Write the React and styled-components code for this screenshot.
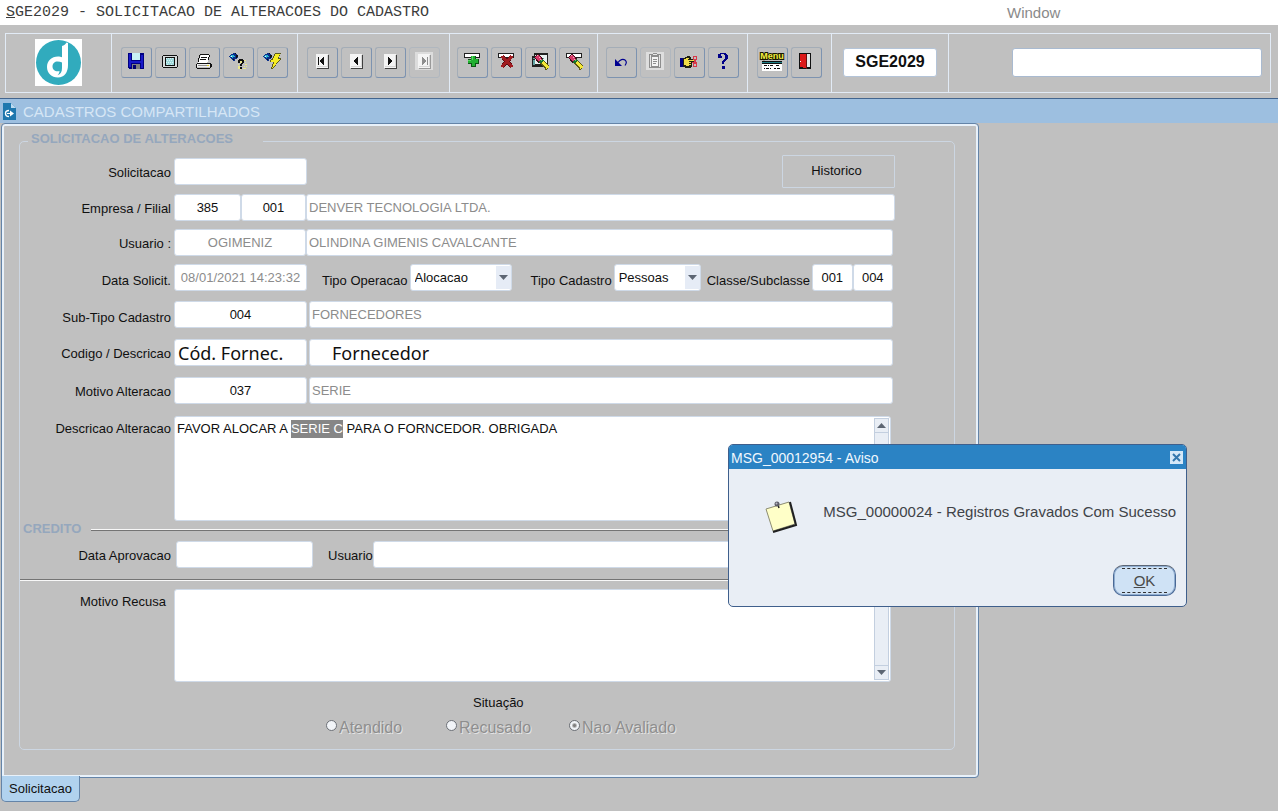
import React, { useEffect, useRef } from "react";
import styled, { createGlobalStyle, css } from "styled-components";

const GlobalStyle = createGlobalStyle`
  *, *::before, *::after { box-sizing: border-box; }
  body {
    margin: 0;
    background: #c0c0c0;
    color: #101010;
    font: 13px/16px "Liberation Sans", Arial, sans-serif;
  }
  button, input, select, textarea { font: inherit; color: inherit; margin: 0; }
`;

const Page = styled.div`
  position: relative;
  min-height: 100vh;
  background: #c0c0c0;
`;

/* ---------- title line ---------- */

const MenuBar = styled.header`
  display: flex;
  align-items: center;
  height: 25px;
  padding: 0 6px;
  background: #fff;
`;

const ProgramTitle = styled.h1`
  flex: 0 0 1001px;
  margin: 0;
  font: 15px/20px "Liberation Mono", "Courier New", monospace;
  color: #3c3c3c;
`;

const MenuLink = styled.a`
  font-size: 15px;
  line-height: 20px;
  color: #8a8a8a;
  text-decoration: none;
`;

/* ---------- toolbar ---------- */

const ToolbarArea = styled.div`
  padding: 8px 7px 5px 5px;
`;

const Toolbar = styled.div`
  display: flex;
  height: 60px;
  border: 1px solid #e2ebf6;
`;

const ToolGroup = styled.div`
  display: flex;
  align-items: center;
  gap: 3px;
  padding: 0 ${(p) => p.$pad ?? 9}px 2px;
  border-right: 1px solid #e2ebf6;
  ${(p) =>
    p.$grow &&
    css`
      flex: 1;
      border-right: 0;
      padding: 0 8px 2px 63px;
    `}
`;

const ToolButton = styled.button`
  display: flex;
  align-items: center;
  justify-content: center;
  width: 31px;
  height: 31px;
  padding: 0 1px 2px 0;
  border: 1px solid;
  border-color: #a4adb7 #7d93b0 #7d93b0 #a4adb7;
  border-radius: 3px;
  background: #c0c0c0;
  &:disabled { border-color: #b0b7bf; }
`;

const CodeBox = styled.input`
  width: 94px;
  height: 29px;
  padding: 0;
  border: 1px solid #b4c4d8;
  border-radius: 3px;
  background: #fff;
  text-align: center;
  font-weight: bold;
  font-size: 16px;
`;

const SearchBox = styled.input`
  flex: 1;
  min-width: 0;
  height: 29px;
  border: 1px solid #a9bad0;
  border-radius: 3px;
  background: #fff;
`;

/* ---------- form window ---------- */

const WindowTitle = styled.div`
  display: flex;
  align-items: center;
  gap: 7px;
  height: 25px;
  padding: 0 3px;
  border-top: 1px solid #42658f;
  background: #9dbfe0;
`;

const WindowHeading = styled.h2`
  margin: 0;
  padding-top: 2px;
  font-size: 15px;
  line-height: 20px;
  font-weight: normal;
  color: #d6e6f5;
`;

const Form = styled.form`
  max-width: 979px;
  padding-left: 1px;
`;

const Panel = styled.div`
  padding: 6px 23px 27px 15px;
  border: 1px solid #6484a8;
  border-radius: 4px 4px 4px 0;
  box-shadow: inset 0 0 0 2px #e8f1fa;
`;

const Tab = styled.button`
  position: relative;
  display: block;
  height: 26px;
  margin-top: -2px;
  padding: 0 7px;
  border: 1px solid #6484a8;
  border-top: 0;
  border-radius: 0 0 5px 5px;
  background: #b1d2ee;
`;

const Group = styled.fieldset`
  min-width: 0;
  margin: 2px 0 0 2px;
  padding: 5px 59px 11px 0;
  border: 1px solid #ccd6e2;
  border-radius: 5px;
`;

const GroupLegend = styled.legend`
  margin-left: 8px;
  padding: 0 30px 4px 3px;
  font-weight: bold;
  line-height: 14px;
  color: #95a7bd;
`;

const Row = styled.div`
  display: flex;
  align-items: ${(p) => (p.$top ? "flex-start" : "center")};
  gap: ${(p) => p.$gap ?? 3}px;
  margin-top: ${(p) => p.$above ?? 0}px;
  padding-right: ${(p) => p.$inset ?? 2}px;
`;

const RowLabel = styled.label`
  flex: 0 0 151px;
  padding-top: ${(p) => (p.$low ? 6 : 2)}px;
  padding-right: ${(p) => p.$right ?? 0}px;
  text-align: right;
  white-space: nowrap;
  ${(p) =>
    p.$high &&
    css`
      padding-top: 5px;
    `}
`;

const InlineLabel = styled.label`
  padding-top: ${(p) => (p.$low ? 6 : 2)}px;
  margin-left: ${(p) => p.$before ?? 0}px;
  white-space: nowrap;
`;

const Fields = styled.div`
  display: flex;
  flex: 1;
  align-items: center;
  gap: ${(p) => p.$gap ?? 2}px;
  min-width: 0;
`;

const Field = styled.input`
  ${(p) => (p.$width ? `flex: 0 0 ${p.$width}px; width: ${p.$width}px;` : "flex: 1; min-width: 0;")}
  height: 27px;
  padding: 0 2px;
  border: 1px solid #cfdae8;
  border-radius: 3px;
  background: #fff;
  text-align: ${(p) => (p.$center ? "center" : "left")};
  color: ${(p) => (p.$muted ? "#8c8c8c" : "#101010")};
`;

const BigField = styled(Field)`
  padding-left: ${(p) => p.$indent ?? 3}px;
  font-family: "Noto Sans", sans-serif;
  font-size: 18px;
`;

const HistoryButton = styled.button`
  width: 113px;
  height: 33px;
  margin-left: auto;
  padding: 0 4px 2px 0;
  border: 1px solid #ccd6e2;
  border-radius: 1px;
  background: #c0c0c0;
`;

const SelectBox = styled.span`
  position: relative;
  flex: 0 0 ${(p) => p.$width}px;
`;

const Select = styled.select`
  appearance: none;
  display: block;
  width: 100%;
  height: 27px;
  padding: 0 16px 0 4px;
  border: 1px solid #cfdae8;
  border-radius: 3px;
  background: #fff;
`;

const SelectArrow = styled.span`
  position: absolute;
  top: 2px;
  right: 1px;
  display: flex;
  align-items: center;
  justify-content: center;
  width: 15px;
  height: 23px;
  background: #e6ecf6;
  pointer-events: none;
`;

const MemoBox = styled.div`
  display: flex;
  flex: 1;
  height: ${(p) => p.$height}px;
  margin-right: 2px;
  padding: 1px;
  border: 1px solid #cfdae8;
  border-radius: 3px;
  background: #fff;
`;

const Memo = styled.textarea`
  flex: 1;
  min-width: 0;
  padding: 2px 1px;
  border: 0;
  outline: 0;
  resize: none;
  overflow: hidden;
  background: #fff;
  line-height: 18px;
  &::selection { background: #868686; color: #fff; }
`;

const ScrollRail = styled.div`
  display: flex;
  flex-direction: column;
  justify-content: space-between;
  width: 15px;
  border: 1px solid #c3cfdf;
  background: #e9eef5;
`;

const ScrollButton = styled.button`
  display: flex;
  align-items: center;
  justify-content: center;
  height: 14px;
  padding: 0;
  border: 0;
  background: #e9eef5;
  border-${(p) => (p.$up ? "bottom" : "top")}: 1px solid #c3cfdf;
`;

const SectionRow = styled.div`
  display: flex;
  align-items: center;
  gap: 10px;
  height: 16px;
  padding-left: 3px;
`;

const SectionTitle = styled.h3`
  margin: 0;
  font-size: 13px;
  line-height: 16px;
  color: #95a7bd;
`;

const Rule = styled.hr`
  flex: 1;
  height: 2px;
  margin: ${(p) => (p.$spaced ? "11px 0 8px" : "2px 0 0")};
  border: 0;
  border-top: 1px solid ${(p) => (p.$spaced ? "#747474" : "#f8f8f8")};
  border-bottom: 1px solid ${(p) => (p.$spaced ? "#f8f8f8" : "#747474")};
`;

const Situation = styled.div`
  padding: 13px 0 0 306px;
`;

const SituationTitle = styled.div`
  padding-left: 147px;
`;

const RadioGrid = styled.div`
  display: grid;
  grid-template-columns: 120px 123px auto;
  margin-top: 7px;
`;

const RadioLabel = styled.label`
  display: flex;
  gap: 2px;
  font-size: 16px;
  line-height: 20px;
  color: #8e8e8e;
  text-shadow: 1px 1px 0 #e4e4e4;
  white-space: nowrap;
`;

const Radio = styled.input`
  appearance: none;
  width: 11px;
  height: 11px;
  margin: 2px 0 0;
  border: 1px solid #6c7077;
  border-radius: 50%;
  background: #f1f4f8;
  &:checked { background: radial-gradient(circle, #808080 0 1px, #f1f4f8 3px); }
`;

/* ---------- message window ---------- */

const Dialog = styled.section`
  position: absolute;
  top: 444px;
  left: 728px;
  width: 459px;
  border: 1px solid #3f5f8c;
  border-radius: 5px;
  background: #e9eef5;
  overflow: hidden;
`;

const DialogBar = styled.div`
  display: flex;
  align-items: center;
  justify-content: space-between;
  height: 24px;
  padding: 0 3px 0 2px;
  background: #2b83c4;
  color: #f0f7fd;
`;

const DialogTitle = styled.h2`
  margin: 0;
  padding-top: 2px;
  font-size: 14px;
  line-height: 20px;
  font-weight: normal;
`;

const CloseButton = styled.button`
  display: flex;
  width: 13px;
  height: 13px;
  padding: 0;
  border: 0;
  background: #d5e8f8;
`;

const DialogBody = styled.div`
  display: flex;
  justify-content: space-between;
  align-items: flex-start;
  padding: 31px 10px 0 35px;
`;

const DialogText = styled.p`
  margin: 0;
  padding-top: 2px;
  font-size: 15px;
  line-height: 20px;
  color: #3f4348;
  white-space: nowrap;
`;

const DialogActions = styled.div`
  display: flex;
  justify-content: flex-end;
  padding: 31px 10px 10px;
`;

const OkButton = styled.button`
  width: 63px;
  height: 31px;
  padding: 1px 8px;
  border: 1px solid #4a6995;
  border-top-color: #5c6675;
  border-radius: 10px;
  background: #cfe2f5;
  box-shadow: inset 0 0 0 1px #8fadd0;
  color: #4a4a4a;
`;

const OkFace = styled.span`
  display: block;
  padding-top: 1px;
  border-top: 1px dashed #303030;
  border-bottom: 1px dashed #303030;
  font-size: 15px;
  line-height: 22px;
`;

/* ---------- drawings ---------- */

const Art = ({ layers, children }) => (
  <svg width="18" height="18" viewBox="0 0 18 18" shapeRendering="crispEdges" aria-hidden="true">
    {layers && layers.map(([fill, d], i) => <path key={i} fill={fill} d={d} />)}
    {children}
  </svg>
);

const Caret = ({ up }) => (
  <svg width="9" height="5" viewBox="0 0 9 5" aria-hidden="true">
    <path d={up ? "M4.500 0L9 5H0z" : "M0 0h9L4.500 5z"} fill="#5d6673" />
  </svg>
);

const Logo = () => (
  <svg width="47" height="47" viewBox="0 0 47 47" aria-hidden="true">
    <path fill="#fff" d="M0 0h47v47H0z" />
    <circle cx="23.500" cy="23.500" r="22.500" fill="#31abbd" />
    <path
      fill="#fff"
      d="M27 7c2-.6 3.500-1.600 4.500-3.500l1.500.5v22c0 7.500-3.500 12.500-10 12.500-6.500 0-11-4.500-11-10.500s4.500-10.500 11-10.500c1.500 0 3 .3 4 .8z"
    />
    <path fill="#31abbd" d="M27 23.500V29c0 4-1.500 6.200-4.500 7.300 1.300-1.500 2-2.800 2-4.300-3.500 1.200-7-.8-7-4.500 0-3 2.200-5 5-5 1.800 0 3.300.4 4.500 1z" />
  </svg>
);

const SaveIcon = () => (
  <Art
    layers={[
      ["#000080", "M1 1h16v16H2v-1H1z"],
      ["#1818c8", "M2 2h2v13H2zM14 3h2v13h-2zM4 9h10v2H4z"],
      ["#c8f0f4", "M5 1h8v7H5z"],
      ["#808080", "M5 12h8v5H5z"],
      ["#000070", "M6 13h3v4H6z"],
    ]}
  />
);

const ScreenIcon = () => (
  <Art
    layers={[
      ["#101010", "M2 3h14v1h1v11h-1v1H2v-1H1V4h1z"],
      ["#d8dcdc", "M2 4h14v11H2z"],
      ["#101010", "M4 5h10v9H4z"],
      ["#9ed8da", "M5 6h8v7H5z"],
      ["#d8f6f6", "M5 6h1v1H5zM7 6h1v1H7zM9 6h1v1H9zM11 6h1v1h-1zM6 8h1v1H6zM8 8h1v1H8zM10 8h1v1h-1zM5 10h1v1H5zM7 10h1v1H7zM9 10h1v1H9zM11 10h1v1h-1zM6 12h1v1H6zM10 12h1v1h-1z"],
    ]}
  />
);

const PrintIcon = () => (
  <Art
    layers={[
      ["#fff", "M6 3h9v1l-3 7H3z"],
      ["#101010", "M5 2h9v1H5zM14 3h1v2h-1zM13 5h1v3h-1zM4 3h1v3H4zM3 6h1v4H3zM6 5h6v1H6zM5 7h6v1H5zM2 11h14v1H2z"],
      ["#f0f0f0", "M2 12h13v3H2z"],
      ["#909090", "M3 13h11v1H3z"],
      ["#101010", "M1 12h1v4H1zM15 11h1v5h-1zM2 16h13v1H2zM16 12h1v3h-1z"],
      ["#d8c820", "M12 13h2v1h-2z"],
    ]}
  />
);

const Torch = () => (
  <>
    <path fill="#0b2f8a" d="M0 4h1V3h1V2h2V1h2v1h2v1h1v3H8v1H6v2H4V8H3V7H2V6H1V5H0z" />
    <path fill="#28b4d4" d="M1 4h1V3h3v1h1v1H4v1H3V5H1z" />
    <path fill="#101010" d="M6 1h1v1H6zM7 3h2v2H8v1H7zM4 7h1v1H4z" />
    <path fill="#e8f8f8" d="M2 4h1v1H2z" />
  </>
);

const FindIcon = () => (
  <Art>
    <Torch />
    <path fill="#ece88a" d="M9 8h1v1H9zM11 9h2v2h-2zM15 8h2v1h-2zM16 10h1v1h-1zM9 12h1v1H9zM16 12h2v1h-2zM15 14h1v1h-1zM17 14h1v1h-1zM9 14h2v3H9zM14 16h3v1h-3zM11 17h1v1h-1z" />
    <path fill="#101010" d="M9 8h1V7h4v1h1v3h-1v1h-1v2h-2v-2h1v-1h1V9h-2v2H9zM11 15h2v2h-2z" />
  </Art>
);

const RunQueryIcon = () => (
  <Art>
    <Torch />
    <path fill="#5a5a20" d="M12 1h6v1h-1v2h-1v2h2v2h-1v1h-1v1h-1v1h-1v1h-1v2h-1v1h-1v1h-1v1H8v-2h1v-3h1v-2H7V8h1V7h1V6h1V4h1V2h1z" />
    <path fill="#f6ec24" d="M12 2h5v1h-1v2h-1v2h2v1h-1v1h-1v1h-1v1h-1v2h-1v1h-1v1h-1v1H9v-1h1v-3h1v-2H8V8h2V6h1V4h1z" />
  </Art>
);

const NavIcon = ({ kind, off }) => {
  const ink = off ? "#8e8e8e" : "#101010";
  return (
    <Art>
      {off && <path fill="#dcdcdc" d="M0 0h18v18H0z" />}
      <path fill={off ? "#9a9a9a" : "#404040"} d="M4 3h12v14H4z" />
      <path fill="#f4f4f4" d="M3 2h12v14H3z" />
      <path fill="#d8d8d8" d="M4 15h11V3h-1v11H4z" />
      {(kind === "first" || kind === "prev") && <path fill={ink} d="M7 8h1V7h1V6h1V5h1v8h-1v-1H9v-1H8v-1H7z" />}
      {(kind === "last" || kind === "next") && <path fill={ink} d="M7 5h1v1h1v1h1v1h1v2h-1v1H9v1H8v1H7z" />}
      {kind === "first" && <path fill={ink} d="M5 5h1v8H5z" />}
      {kind === "last" && <path fill={ink} d="M12 5h1v8h-1z" />}
    </Art>
  );
};

const Strip = () => (
  <>
    <path fill="#202020" d="M1 1h16v5H1z" />
    <path fill="#fff" d="M2 2h14v3H2z" />
  </>
);

const InsertIcon = () => (
  <Art>
    <Strip />
    <path fill="#0c5414" d="M8 4h5v3h3v5h-3v3H8v-3H5V7h3z" />
    <path fill="#20b030" d="M8 4h4v3h3v4h-3v3H9v-3H5V8h3z" />
    <path fill="#58d860" d="M9 4h1v4H9zM5 8h3v1H5z" />
  </Art>
);

const DeleteIcon = () => (
  <Art>
    <Strip />
    <path fill="none" stroke="#5c0a10" strokeWidth="4" d="M5 4l10 11M15 4L5 15" />
    <path fill="none" stroke="#a01c20" strokeWidth="3" d="M5 4l10 11M15 4L5 15" />
  </Art>
);

const Eraser = () => (
  <>
    <path fill="none" stroke="#401018" strokeWidth="6" d="M5 3.500L10 9" />
    <path fill="none" stroke="#d83868" strokeWidth="4" d="M5.500 4L10 9" />
    <path fill="#f8a8c0" d="M6 3h1v1H6zM8 5h1v1H8zM9 7h1v1H9z" />
    <path fill="none" stroke="#5c5810" strokeWidth="5" d="M11 10l6 6.500" />
    <path fill="none" stroke="#f4e838" strokeWidth="3" d="M11.500 10l5.500 6" />
    <path fill="none" stroke="#187030" strokeWidth="5" d="M9.500 8.500l1.500 1.600" />
    <path fill="#60c868" d="M10 8h1v1h-1z" />
  </>
);

const ClearFormIcon = () => (
  <Art>
    <path fill="#202020" d="M3 1h14v13h-2v1H1V4h2z" />
    <path fill="#e8f0f0" d="M4 3h12v9H4z" />
    <path fill="#60a0a0" d="M2 6h11v1H2zM2 8h2v5H2z" />
    <Eraser />
  </Art>
);

const ClearRecordIcon = () => (
  <Art>
    <Strip />
    <Eraser />
  </Art>
);

const UndoIcon = () => (
  <svg width="18" height="18" viewBox="0 0 18 18" aria-hidden="true">
    <path fill="#000090" d="M3 7v7h7z" />
    <path fill="none" stroke="#000090" strokeWidth="1.200" d="M6 10.500c2-3 5-4 7-2.500s1.500 3.500 0 5.500" />
  </svg>
);

const ClipboardIcon = () => (
  <Art>
    <path fill="#dedede" d="M0 0h18v18H0z" />
    <path fill="#8e8e8e" d="M3 2h4V1h4v1h4v14H3z" />
    <path fill="#e8e8e8" d="M4 3h1v12H4zM13 3h1v12h-1zM7 2h4v1H7z" />
    <path fill="#f4f4f4" d="M6 5h6v9H6z" />
    <path fill="#8e8e8e" d="M7 7h4v1H7zM7 9h4v1H7zM7 11h3v1H7z" />
  </Art>
);

const HandIcon = () => (
  <Art>
    <path fill="#000080" d="M0 6h3v9H0z" />
    <path fill="#202010" d="M3 6h2V5h2V4h3v1h1v2h4v3h-3v5h-1v1H5v-1H3z" />
    <path fill="#f0dc48" d="M4 7h2V6h3v1H8v1h6v1H9v1h2v1H9v1h2v1H9v1H6v-1H4z" />
    <path fill="none" stroke="#d83848" d="M13.500 4.500h3v3h-3zM13.500 11.500h3v3h-3zM12 10.500h5" />
    <path fill="#d83848" d="M14 8h2v3h-2z" />
  </Art>
);

const HelpIcon = () => (
  <Art layers={[["#000088", "M4 2h2V1h6v1h1v1h1v4h-1v1h-1v1h-1v1h-1v2H8V9h1V8h1V7h1V3h-1V2H7v2h1v2H4zM8 14h3v3H8z"]]} />
);

const MenuLettering = styled.text`
  font: bold 9px "Liberation Sans Narrow", "Liberation Sans", sans-serif;
  text-anchor: middle;
  fill: #f4f040;
  stroke: #181800;
  stroke-width: 2px;
  paint-order: stroke;
`;

const MenuIcon = () => (
  <svg width="28" height="20" viewBox="0 0 28 20" aria-hidden="true">
    <MenuLettering x="14" y="8">Menu</MenuLettering>
    <path fill="#101010" d="M4 10h20v3H4z" />
    <path fill="#208088" d="M4 11h20v1H4z" />
    <path fill="#fff" d="M4 13h20v7H4z" />
    <path fill="#101010" d="M6 14h3v1H6zM10 14h1v1h-1zM12 14h3v1h-3zM18 14h3v1h-3zM6 17h1v1H6zM8 17h3v1H8zM12 17h1v1h-1zM16 17h2v1h-2zM19 17h3v1h-3z" />
  </svg>
);

const ExitIcon = () => (
  <Art>
    <path fill="#101010" d="M2 1h12v16H2z" />
    <path fill="#e8e8e8" d="M9 2h4v13H9z" />
    <path fill="#dc1818" d="M3 2h6v14l-6-1z" />
    <path fill="#fff" d="M3 9h1v1H3z" />
    <path fill="#681010" d="M9 2h1v15H9z" />
  </Art>
);

const FileIcon = () => (
  <svg width="13" height="17" viewBox="0 0 13 17" aria-hidden="true">
    <path fill="#1f77ae" d="M0 0h8l5 5v12H0z" />
    <path fill="#bcdaf0" d="M8 0l5 5H8z" />
    <path fill="none" stroke="#fff" strokeWidth="1.400" d="M6 7.500C3.500 7.500 2.500 9 2.500 10.500S3.500 13.500 6 13.500" />
    <path fill="#fff" d="M4 10h3V7.500l4 3-4 3V11H4z" />
  </svg>
);

const NoteIcon = () => (
  <svg width="34" height="34" viewBox="0 0 34 34" aria-hidden="true">
    <path fill="#ffffc8" stroke="#8d8d72" d="M2 9l23-7 6 22L9 31z" />
    <path fill="none" stroke="#202020" strokeWidth="2" d="M9 32l23-7-1-4-5-19" />
    <path stroke="#202020" strokeWidth="1.500" d="M14 5l1 3" />
    <circle cx="13" cy="4" r="2.500" fill="#5c5c68" />
    <circle cx="12.500" cy="3.500" r="1" fill="#b8b8c4" />
  </svg>
);

const CrossIcon = () => (
  <svg width="13" height="13" viewBox="0 0 13 13" aria-hidden="true">
    <path stroke="#3377ae" strokeWidth="2" d="M3 3l7 7M10 3l-7 7" />
  </svg>
);

/* ---------- page ---------- */

const TOOL_GROUPS = [
  {
    tools: [
      ["Salvar", SaveIcon],
      ["Tela", ScreenIcon],
      ["Imprimir", PrintIcon],
      ["Entrar consulta", FindIcon],
      ["Executar consulta", RunQueryIcon],
    ],
  },
  {
    tools: [
      ["Primeiro", () => <NavIcon kind="first" />],
      ["Anterior", () => <NavIcon kind="prev" />],
      ["Proximo", () => <NavIcon kind="next" />],
      ["Ultimo", () => <NavIcon kind="last" off />, true],
    ],
  },
  {
    pad: 7,
    tools: [
      ["Inserir", InsertIcon],
      ["Remover", DeleteIcon],
      ["Limpar tela", ClearFormIcon],
      ["Limpar registro", ClearRecordIcon],
    ],
  },
  {
    pad: 8,
    tools: [
      ["Desfazer", UndoIcon],
      ["Colar", ClipboardIcon, true],
      ["Lista", HandIcon],
      ["Ajuda", HelpIcon],
    ],
  },
  {
    tools: [
      ["Menu", MenuIcon],
      ["Sair", ExitIcon],
    ],
  },
];

const Dropdown = ({ id, width, value }) => (
  <SelectBox $width={width}>
    <Select id={id} defaultValue={value}>
      <option>{value}</option>
    </Select>
    <SelectArrow>
      <Caret />
    </SelectArrow>
  </SelectBox>
);

const MemoField = ({ height, ...rest }) => (
  <MemoBox $height={height}>
    <Memo spellCheck={false} {...rest} />
    <ScrollRail>
      <ScrollButton type="button" $up aria-label="Rolar para cima">
        <Caret up />
      </ScrollButton>
      <ScrollButton type="button" aria-label="Rolar para baixo">
        <Caret />
      </ScrollButton>
    </ScrollRail>
  </MemoBox>
);

const DESCRIPTION = "FAVOR ALOCAR A SERIE C PARA O FORNCEDOR. OBRIGADA";

export default function App() {
  const memoRef = useRef(null);

  useEffect(() => {
    const start = DESCRIPTION.indexOf("SERIE C");
    memoRef.current.focus({ preventScroll: true });
    memoRef.current.setSelectionRange(start, start + 7);
  }, []);

  return (
    <Page>
      <GlobalStyle />
      <MenuBar>
        <ProgramTitle>
          <u>S</u>GE2029 - SOLICITACAO DE ALTERACOES DO CADASTRO
        </ProgramTitle>
        <MenuLink href="#window">Window</MenuLink>
      </MenuBar>

      <ToolbarArea>
        <Toolbar role="toolbar">
          <ToolGroup $pad={29}>
            <Logo />
          </ToolGroup>
          {TOOL_GROUPS.map((group, i) => (
            <ToolGroup key={i} $pad={group.pad}>
              {group.tools.map(([name, Icon, off]) => (
                <ToolButton key={name} type="button" aria-label={name} disabled={off}>
                  <Icon />
                </ToolButton>
              ))}
            </ToolGroup>
          ))}
          <ToolGroup $pad={11}>
            <CodeBox aria-label="Programa" defaultValue="SGE2029" />
          </ToolGroup>
          <ToolGroup $grow>
            <SearchBox aria-label="Mensagem" />
          </ToolGroup>
        </Toolbar>
      </ToolbarArea>

      <WindowTitle>
        <FileIcon />
        <WindowHeading>CADASTROS COMPARTILHADOS</WindowHeading>
      </WindowTitle>

      <Form>
        <Panel>
          <Group>
            <GroupLegend>SOLICITACAO DE ALTERACOES</GroupLegend>

            <Row $inset={0}>
              <RowLabel htmlFor="solicitacao">Solicitacao</RowLabel>
              <Field id="solicitacao" $width={133} />
              <HistoryButton type="button">Historico</HistoryButton>
            </Row>

            <Row $above={6} $inset={0}>
              <RowLabel htmlFor="empresa">Empresa / Filial</RowLabel>
              <Fields $gap={0}>
                <Field id="empresa" $width={67} $center defaultValue="385" />
                <Field aria-label="Filial" $width={65} $center defaultValue="001" />
                <Field aria-label="Nome da empresa" $muted readOnly defaultValue="DENVER TECNOLOGIA LTDA." />
              </Fields>
            </Row>

            <Row $above={8}>
              <RowLabel htmlFor="usuario">Usuario :</RowLabel>
              <Fields $gap={0}>
                <Field id="usuario" $width={132} $center $muted readOnly defaultValue="OGIMENIZ" />
                <Field aria-label="Nome do usuario" $muted readOnly defaultValue="OLINDINA GIMENIS CAVALCANTE" />
              </Fields>
            </Row>

            <Row $above={8}>
              <RowLabel htmlFor="data" $low>Data Solicit.</RowLabel>
              <Fields>
                <Field id="data" $width={133} $center $muted readOnly defaultValue="08/01/2021 14:23:32" />
                <InlineLabel htmlFor="operacao" $low $before={13}>Tipo Operacao</InlineLabel>
                <Dropdown id="operacao" width={102} value="Alocacao" />
                <InlineLabel htmlFor="cadastro" $low $before={17}>Tipo Cadastro</InlineLabel>
                <Dropdown id="cadastro" width={87} value="Pessoas" />
                <InlineLabel htmlFor="classe" $low $before={4}>Classe/Subclasse</InlineLabel>
                <Fields $gap={0}>
                  <Field id="classe" $center defaultValue="001" />
                  <Field aria-label="Subclasse" $center defaultValue="004" />
                </Fields>
              </Fields>
            </Row>

            <Row $above={10}>
              <RowLabel htmlFor="subtipo" $low>Sub-Tipo Cadastro</RowLabel>
              <Fields>
                <Field id="subtipo" $width={133} $center defaultValue="004" />
                <Field aria-label="Nome do sub-tipo" $muted readOnly defaultValue="FORNECEDORES" />
              </Fields>
            </Row>

            <Row $above={11}>
              <RowLabel htmlFor="codigo">Codigo / Descricao</RowLabel>
              <Fields>
                <BigField id="codigo" $width={133} defaultValue="Cód. Fornec." />
                <BigField aria-label="Descricao" $indent={22} defaultValue="Fornecedor" />
              </Fields>
            </Row>

            <Row $above={11}>
              <RowLabel htmlFor="motivo">Motivo Alteracao</RowLabel>
              <Fields>
                <Field id="motivo" $width={133} $center defaultValue="037" />
                <Field aria-label="Nome do motivo" $muted readOnly defaultValue="SERIE" />
              </Fields>
            </Row>

            <Row $above={12} $top>
              <RowLabel htmlFor="descricao" $high>Descricao Alteracao</RowLabel>
              <MemoField id="descricao" ref={memoRef} height={105} defaultValue={DESCRIPTION} />
            </Row>

            <SectionRow>
              <SectionTitle>CREDITO</SectionTitle>
              <Rule />
            </SectionRow>

            <Row $above={4} $gap={5}>
              <RowLabel htmlFor="aprovacao">Data Aprovacao</RowLabel>
              <Fields $gap={0}>
                <Field id="aprovacao" $width={137} />
                <InlineLabel htmlFor="aprovador" $before={15}>Usuario</InlineLabel>
                <Field id="aprovador" />
              </Fields>
            </Row>

            <Rule $spaced />

            <Row $top>
              <RowLabel htmlFor="recusa" $high $right={5}>Motivo Recusa</RowLabel>
              <MemoField id="recusa" height={93} />
            </Row>

            <Situation role="radiogroup" aria-labelledby="situacao">
              <SituationTitle id="situacao">Situação</SituationTitle>
              <RadioGrid>
                {["Atendido", "Recusado", "Nao Avaliado"].map((name, i) => (
                  <RadioLabel key={name}>
                    <Radio type="radio" name="situacao" disabled defaultChecked={i === 2} />
                    {name}
                  </RadioLabel>
                ))}
              </RadioGrid>
            </Situation>
          </Group>
        </Panel>
        <Tab type="button">Solicitacao</Tab>
      </Form>

      <Dialog role="dialog" aria-labelledby="aviso">
        <DialogBar>
          <DialogTitle id="aviso">MSG_00012954 - Aviso</DialogTitle>
          <CloseButton type="button" aria-label="Fechar">
            <CrossIcon />
          </CloseButton>
        </DialogBar>
        <DialogBody>
          <NoteIcon />
          <DialogText>MSG_00000024 - Registros Gravados Com Sucesso</DialogText>
        </DialogBody>
        <DialogActions>
          <OkButton type="button">
            <OkFace>
              <u>O</u>K
            </OkFace>
          </OkButton>
        </DialogActions>
      </Dialog>
    </Page>
  );
}
